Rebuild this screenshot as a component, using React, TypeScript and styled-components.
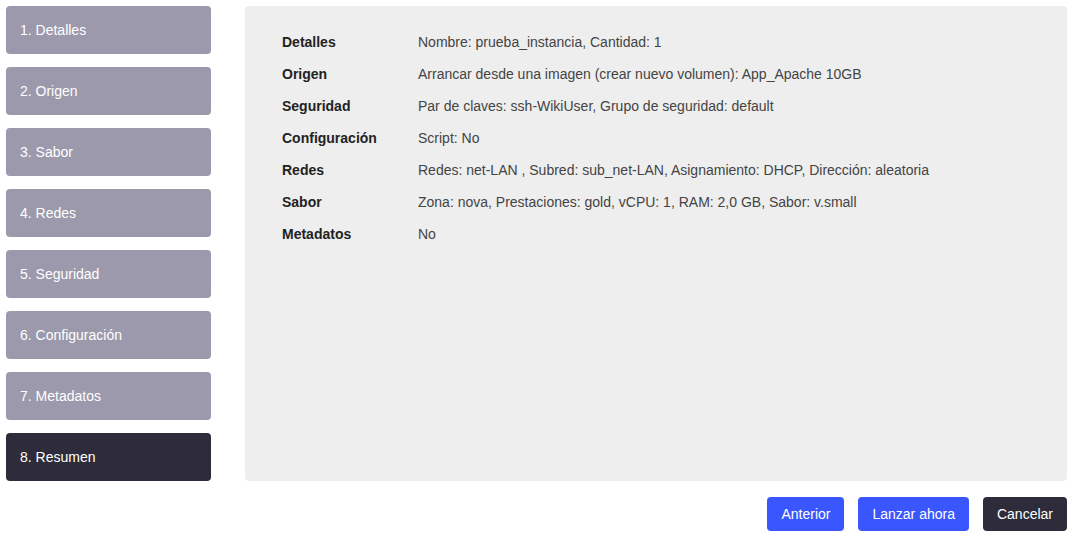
import styled, { createGlobalStyle } from "styled-components";

const GlobalStyle = createGlobalStyle`
  body {
    margin: 0;
    font-family: "Liberation Sans", Arial, sans-serif;
    background: #ffffff;
  }
`;

const Page = styled("div")`
  padding: 6px 7px 5px 6px;
  display: flex;
  flex-direction: column;
  gap: 16px;
`;

const Top = styled("div")`
  display: flex;
  gap: 34px;
`;

const Steps = styled("nav")`
  width: 205px;
  display: flex;
  flex-direction: column;
  gap: 13px;
`;

const Step = styled("div")<{ $active?: boolean }>`
  height: 48px;
  border-radius: 4px;
  background-color: ${(p) => (p.$active ? "#2e2c3a" : "#9b99ab")};
  color: #ffffff;
  font-size: 14px;
  display: flex;
  align-items: center;
  padding-left: 14px;
`;

const Panel = styled("div")`
  flex: 1;
  height: 475px;
  background-color: #eeeeee;
  border-radius: 4px;
  padding: 20px 37px;
  box-sizing: border-box;
`;

const Row = styled("div")`
  display: flex;
  height: 32px;
  align-items: center;
  font-size: 14px;
`;

const Label = styled("div")`
  width: 136px;
  font-weight: bold;
  color: #222222;
`;

const Value = styled("div")`
  color: #444444;
`;

const Actions = styled("div")`
  display: flex;
  justify-content: flex-end;
  gap: 14px;
`;

const Button = styled("button")<{ $variant?: "primary" | "dark" }>`
  height: 34px;
  padding: 0 14px;
  border: none;
  border-radius: 4px;
  font-family: inherit;
  font-size: 14px;
  color: #ffffff;
  background-color: ${(p) => (p.$variant === "dark" ? "#2e2c3a" : "#3a56ff")};
  cursor: pointer;
`;

const steps = [
  "1. Detalles",
  "2. Origen",
  "3. Sabor",
  "4. Redes",
  "5. Seguridad",
  "6. Configuración",
  "7. Metadatos",
  "8. Resumen",
];

const summary = [
  ["Detalles", "Nombre: prueba_instancia, Cantidad: 1"],
  ["Origen", "Arrancar desde una imagen (crear nuevo volumen): App_Apache 10GB"],
  ["Seguridad", "Par de claves: ssh-WikiUser, Grupo de seguridad: default"],
  ["Configuración", "Script: No"],
  ["Redes", "Redes: net-LAN , Subred: sub_net-LAN, Asignamiento: DHCP, Dirección: aleatoria"],
  ["Sabor", "Zona: nova, Prestaciones: gold, vCPU: 1, RAM: 2,0 GB, Sabor: v.small"],
  ["Metadatos", "No"],
];

export default function App() {
  return (
    <>
      <GlobalStyle />
      <Page>
        <Top>
          <Steps>
            {steps.map((s, i) => (
              <Step key={s} $active={i === steps.length - 1}>
                {s}
              </Step>
            ))}
          </Steps>
          <Panel>
            {summary.map(([label, value]) => (
              <Row key={label}>
                <Label>{label}</Label>
                <Value>{value}</Value>
              </Row>
            ))}
          </Panel>
        </Top>
        <Actions>
          <Button $variant="primary">Anterior</Button>
          <Button $variant="primary">Lanzar ahora</Button>
          <Button $variant="dark">Cancelar</Button>
        </Actions>
      </Page>
    </>
  );
}
